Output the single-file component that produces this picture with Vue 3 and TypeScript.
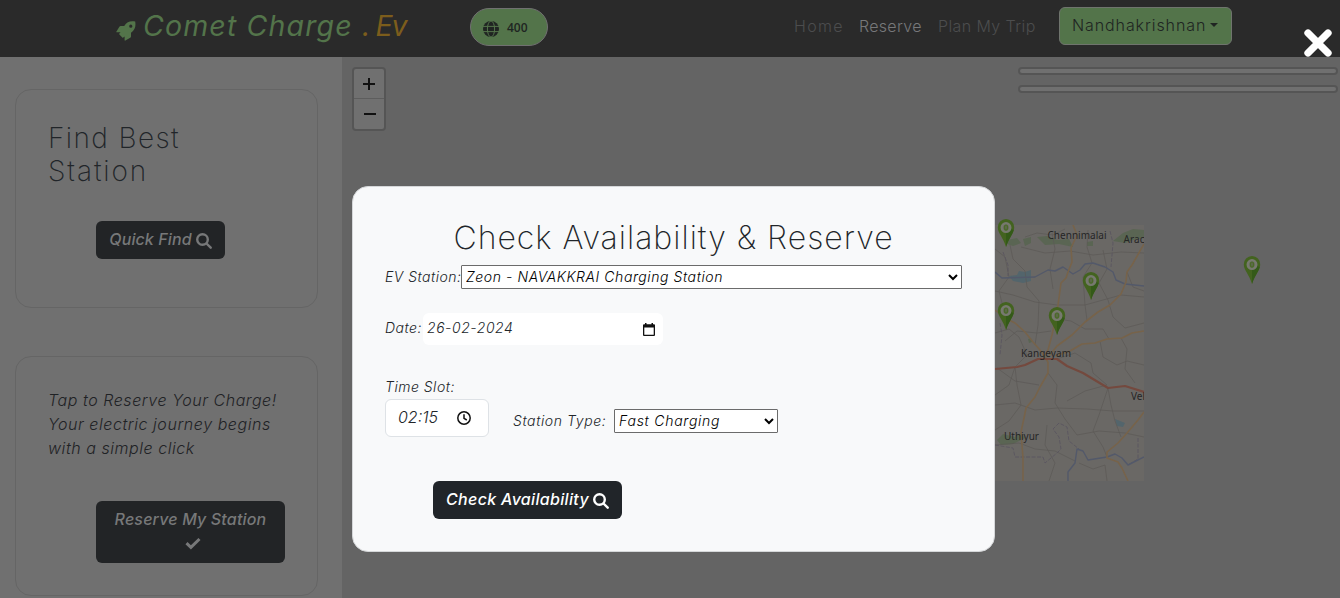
<script setup lang="ts">
import { ref } from 'vue'

interface Pin { x: number; y: number }

const station = ref('Zeon - NAVAKKRAI Charging Station')
const stationType = ref('Fast Charging')

const pins: Pin[] = [
  { x: 656, y: 162 },
  { x: 741, y: 215 },
  { x: 656, y: 245 },
  { x: 707, y: 250 },
  { x: 902, y: 199 },
]

const minorRoads: string[] = [
  'M0 66 L18 70 L40 77 L62 80 L90 80 L126 70 L149 72',
  'M15 20 L18 34 L30 46 L32 62 L44 76 L43 100 L40 120',
  'M26 22 L50 28 L75 26 L98 30 L126 27 L149 28',
  'M57 8 L60 24 L55 44 L58 64',
  'M93 5 L92 22 L97 38 L88 52 L90 80 L92 95',
  'M108 25 L112 44 L104 58 L113 75 L118 92 L130 103 L149 98',
  'M0 108 L14 104 L24 112 L32 130 L20 142 L14 160 L0 170',
  'M20 142 L22 160 L26 180 L14 196 L0 205',
  'M53 148 L62 160 L60 178 L70 194 L82 210 L104 206 L130 208 L149 212',
  'M0 180 L20 178 L40 185 L62 183 L92 184 L118 186 L149 186',
  'M113 163 L108 178 L104 190 L98 206 L108 222 L112 232',
  'M113 163 L116 180 L120 196 L126 212',
  'M62 134 L80 128 L96 138 L98 148 L112 160 L90 166 L72 176',
  'M105 116 L108 132 L122 140 L132 136 L149 140',
  'M126 113 L132 124 L130 144 L140 158',
  'M0 220 L24 218 L40 224 L60 226 L80 236',
  'M52 200 L50 220 L60 238 L54 256',
  'M84 238 L98 244 L110 240 L112 256',
  'M30 12 L42 8 L58 10 L70 4',
  'M132 47 L138 62 L149 66',
  'M2 143 L20 156 L44 160',
  'M0 24 L10 32 L14 52 L4 66 L8 82',
  'M62 94 L76 96 L90 104 L108 104 L114 114',
  'M10 116 L22 106 L42 108 L56 106',
]

const mainRoads: string[] = [
  'M78 0 L82 10 L76 23 L77 37 L73 47 L71 53 L66 58 L64 73 L62 87 L57 110 L53 125 L50 130',
  'M149 19 L137 40 L132 47 L131 57 L126 69 L115 80 L103 87 L90 97 L77 110 L62 121 L54 131',
  'M149 106 L137 108 L127 113 L112 114 L100 118 L87 119 L75 126 L60 131',
  'M0 85 L10 93 L20 98 L30 107 L38 117 L45 125 L53 137',
  'M53 137 L53 148 L45 162 L40 172 L31 183 L29 193 L26 207 L28 233 L28 256',
  'M149 187 L143 195 L132 208 L123 218 L112 227 L112 233 L123 237 L127 243 L133 256',
]
</script>

<template>
  <div class="page">
    <nav class="navbar">
      <div class="brand">
        <svg class="rocket" viewBox="0 0 20 20" aria-hidden="true">
          <path fill-rule="evenodd" d="M19.2.6C14.5-.3 11 .7 8.2 5H4.600Q3.800 5 3.400 5.800L.3 10.700Q.1 11.200.8 11.300H4.500L3.400 12.600Q2.900 13.100 3.400 13.600L6.300 16.600Q6.800 17 7.300 16.500L8.600 15.500V19.200Q8.700 19.900 9.400 19.600L14.200 16.800Q15 16.400 15 15.500V11.700C19 8.800 20 5.400 19.200.6ZM14.800 3.600A1.600 1.600 0 1 1 14.800 6.800A1.600 1.600 0 0 1 14.800 3.600Z" />
        </svg>
        <span class="brand-name">Comet Charge <b>. Ev</b></span>
      </div>
      <div class="credits">
        <svg viewBox="0 0 16 16" aria-hidden="true">
          <circle cx="8" cy="8" r="8" fill="#202522" />
          <g fill="none" stroke="#53744a" stroke-width="1">
            <ellipse cx="8" cy="8" rx="3.600" ry="8" />
            <path d="M0 5.400H16M0 10.600H16" />
          </g>
        </svg>
        <span>400</span>
      </div>
      <div class="links">
        <a class="home">Home</a>
        <a class="active">Reserve</a>
        <a class="trip">Plan My Trip</a>
      </div>
      <button class="user"><span>Nandhakrishnan</span><i class="caret"></i></button>
    </nav>

    <div class="content">
      <aside class="sidebar">
        <section class="card find">
          <h2>Find Best<br /><span>Station</span></h2>
          <button class="dark-btn muted quick">
            <span>Quick Find</span>
            <svg viewBox="0 0 16 16" aria-hidden="true"><circle cx="6.500" cy="6.500" r="5.300" /><path d="M10.500 10.500L14.700 14.700" /></svg>
          </button>
        </section>
        <section class="card tap">
          <p>Tap to Reserve Your Charge!<br />Your electric journey begins<br />with a simple click</p>
          <button class="dark-btn muted reserve">
            <span>Reserve My Station</span>
            <svg viewBox="0 0 16 16" aria-hidden="true"><path d="M1.500 8.200L5.900 12.400L14.500 4" /></svg>
          </button>
        </section>
      </aside>

      <main class="map">
        <div class="zoom">
          <button><svg viewBox="0 0 14 14"><path d="M1 7H13M7 1V13" /></svg></button>
          <button><svg viewBox="0 0 14 14"><path d="M1 7H13" /></svg></button>
        </div>
        <div class="bars"><div></div><div></div></div>
        <svg class="tile" viewBox="0 0 149 256" aria-hidden="true">
          <rect width="149" height="256" fill="#6a6865" />
          <g fill="#5a6553">
            <path d="M12 15L22 13L26 18L18 21L12 19Z" />
            <path d="M28 14L36 12L36 18L30 21Z" />
            <path d="M42 12L52 11L62 15L74 14L78 22L64 19L50 20Z" />
            <path d="M92 17L98 16L98 21L92 21Z" />
            <path d="M118 16L128 8L138 4L149 5V13L138 15L130 18Z" />
            <path d="M2 215L8 209L20 212L26 208L30 213L18 219L6 220Z" />
            <path d="M33 114L36 113L37 117L34 118Z" />
          </g>
          <g fill="#53656c">
            <path d="M14 51L22 50L24 46L30 47L36 45L36 56L28 58L18 56Z" />
            <path d="M120 194L130 198L128 202L122 201Z" />
          </g>
          <g class="minor"><path v-for="d in minorRoads" :key="d" :d="d" /></g>
          <g class="border">
            <path d="M0 220L18 223L20 232L48 232L50 238L62 228L66 224L64 212L58 204L64 198L72 202L74 216L84 224" />
            <path d="M143 213V234L133 240M115 6L118 18L116 42M8 27L13 40V51M5 98L7 110L5 130" />
          </g>
          <g class="river">
            <path d="M0 47L7 53L40 52L53 45L60 46L68 42L78 49L85 45L90 39L98 38L110 42L118 47L121 55L130 59L149 61" />
            <path d="M73 256V247L80 238L82 224L88 226L93 235L112 232L120 229L127 233L133 240L149 232" />
          </g>
          <g class="main"><path v-for="d in mainRoads" :key="d" :d="d" /></g>
          <path class="highway" d="M0 144L22 142L30 140L43 134L62 134L72 141L88 148L113 163L130 161L149 167" />
          <g class="labels">
            <text x="52.500" y="14.400" textLength="59">Chennimalai</text>
            <text x="128.500" y="18" textLength="21">Arac</text>
            <text x="26" y="132" textLength="50">Kangeyam</text>
            <text x="9" y="215" textLength="35">Uthiyur</text>
            <text x="136" y="174.500">Vel</text>
          </g>
        </svg>
        <svg
          v-for="(pin, i) in pins"
          :key="i"
          class="pin"
          viewBox="0 0 18 28"
          :style="{ left: pin.x + 'px', top: pin.y + 'px' }"
          aria-hidden="true"
        >
          <path fill="#43631f" d="M9 0A8.200 8.200 0 0 1 17.200 8.500C17.200 14 12 18 9 28C6 18 .8 14 .8 8.500A8.200 8.200 0 0 1 9 0Z" />
          <path fill="#345a18" d="M9 8L16.700 11C15.500 16 11.500 20 9 28Z" />
          <circle cx="9" cy="8.600" r="4.300" fill="#6c7062" stroke="#77796f" stroke-width="2.400" />
          <ellipse cx="9" cy="8.600" rx="1.600" ry="2.600" fill="#5e6a4c" stroke="#4b6a28" stroke-width="1.200" />
        </svg>
      </main>
    </div>

    <div class="overlay">
      <button class="close"><svg viewBox="0 0 28 28"><path d="M4 4L24 24M24 4L4 24" /></svg></button>
      <section class="modal">
        <h1>Check Availability &amp; Reserve</h1>
        <div class="row station-row">
          <label>EV Station:</label>
          <select v-model="station"><option>Zeon - NAVAKKRAI Charging Station</option></select>
        </div>
        <div class="row date-row">
          <label>Date:</label>
          <div class="date">
            <span>26-02-2024</span>
            <svg viewBox="0 0 12 14"><path fill-rule="evenodd" d="M2 0H3.500V1.300H8.500V0H10V1.300H11Q12 1.300 12 2.300V12Q12 13 11 13H1Q0 13 0 12V2.300Q0 1.300 1 1.300H2ZM1.300 4.500V11.700H10.700V4.500Z" /></svg>
          </div>
        </div>
        <div class="slot-row">
          <div class="slot">
            <label>Time Slot:</label>
            <div class="time">
              <span>02:15</span>
              <svg viewBox="0 0 14 14"><circle cx="7" cy="7" r="6.200" /><path d="M7 3.200V7.300L9.800 9" /></svg>
            </div>
          </div>
          <div class="row type-row">
            <label>Station Type:</label>
            <select v-model="stationType"><option>Fast Charging</option></select>
          </div>
        </div>
        <button class="dark-btn check">
          <span>Check Availability</span>
          <svg viewBox="0 0 16 16" aria-hidden="true"><circle cx="6.500" cy="6.500" r="5.300" /><path d="M10.500 10.500L14.700 14.700" /></svg>
        </button>
      </section>
    </div>
  </div>
</template>

<style>
body { margin: 0; overflow: hidden; }
</style>

<style scoped>
* { box-sizing: border-box; }
.page {
  position: relative;
  width: 1340px;
  height: 598px;
  overflow: hidden;
  font-family: Inter, "Open Sans", sans-serif;
  font-feature-settings: "cv11";
  color: #212529;
}
button { font: inherit; font-feature-settings: inherit; margin: 0; }
svg { display: block; flex: none; }

.navbar { display: flex; height: 57px; background: #2a2a2a; padding-left: 116px; }
.brand { display: flex; width: 354px; }
.rocket { width: 20px; height: 20px; margin-top: 21px; fill: #53744a; }
.brand-name {
  margin: 7px 0 0 7px;
  font-size: 28.500px;
  line-height: 38px;
  font-style: italic;
  color: #53744a;
  white-space: nowrap;
  letter-spacing: 1.150px;
}
.brand-name b { font-weight: 400; color: #7c5d1c; letter-spacing: -1.300px; }
.credits {
  display: flex;
  align-items: center;
  width: 78px;
  height: 38px;
  margin-top: 8px;
  padding-left: 12px;
  border: 1px solid #707070;
  border-radius: 19px;
  background: #53744a;
  font: 600 12px "Open Sans", sans-serif;
  color: #202522;
}
.credits svg { width: 16px; height: 16px; margin: 3px 8px 0 0; }
.links {
  display: flex;
  margin-left: 246px;
  padding-top: 14px;
  width: 265px;
  gap: 16px;
  font-feature-settings: normal;
  font-size: 16px;
  line-height: 24px;
  font-weight: 300;
  color: #4c4d4e;
  white-space: nowrap;
}
.links .home { width: 49px; letter-spacing: 1.300px; }
.links .active { width: 63px; letter-spacing: 0.300px; color: #77787a; }
.links .trip { letter-spacing: 0.400px; }
.user {
  display: flex;
  align-items: center;
  width: 173px;
  height: 38px;
  margin-top: 7px;
  padding: 0 0 2px 12px;
  border: 1px solid #6f746d;
  border-radius: 6px;
  background: #53744a;
  color: #202522;
  font-size: 16px;
  font-weight: 300;
  font-feature-settings: normal;
  letter-spacing: 0.900px;
}
.caret { margin-left: 4px; border: 4px solid transparent; border-top-color: #202522; border-bottom: 0; }

.content { display: flex; height: 541px; }
.sidebar { width: 342px; padding: 32px 24px 0 15px; background: #707070; }
.card { width: 303px; border: 1px solid #656565; border-radius: 16px; padding: 32px; }
.find { height: 219px; }
.tap { height: 240px; margin-top: 48px; }
.card h2 {
  margin: 0;
  font-size: 28px;
  line-height: 33px;
  font-weight: 200;
  font-feature-settings: normal;
  letter-spacing: 1.400px;
}
.card h2 span { letter-spacing: 1.900px; }
.card p {
  margin: -1px 0 0;
  font-size: 16px;
  line-height: 24px;
  font-style: italic;
  font-weight: 300;
  letter-spacing: 0.550px;
  white-space: nowrap;
  color: #1f2225;
}
.dark-btn {
  display: flex;
  align-items: center;
  justify-content: center;
  gap: 4px;
  height: 38px;
  padding: 0;
  border: 0;
  border-radius: 6px;
  background: #212529;
  color: #fff;
  font-size: 16px;
  font-style: italic;
  font-weight: 500;
  line-height: 24px;
  white-space: nowrap;
}
.dark-btn span { margin-top: -2px; }
.dark-btn svg { width: 16px; height: 16px; fill: none; stroke: currentColor; stroke-width: 2.400; stroke-linecap: round; margin-top: 1px; }
.dark-btn.muted { background: #222426; color: #777879; }
.quick { width: 129px; margin: 33px 0 0 48px; letter-spacing: 0.100px; }
.reserve { flex-direction: column; gap: 0; width: 189px; height: 62px; margin: 41px 0 0 48px; letter-spacing: 0.170px; }
.dark-btn.reserve svg { stroke-width: 3; margin: 4px 0 4px 5px; stroke-linecap: butt; }

.map { position: relative; flex: 1; background: #646464; }
.zoom {
  width: 34px;
  height: 64px;
  margin: 10px 0 0 10px;
  border: 2px solid #555;
  border-radius: 4px;
  background: #707070;
}
.zoom button { display: grid; place-items: center; width: 30px; height: 29px; padding: 0; border: 0; background: none; }
.zoom button:first-child { height: 30px; border-bottom: 1px solid #5d5d5d; }
.zoom button:last-child { padding: 0 0 0 1px; }
.zoom svg { width: 14px; height: 14px; stroke: #111; stroke-width: 2; }
.bars { position: absolute; top: 10px; right: 2px; display: grid; gap: 10px; width: 320px; }
.bars div { height: 8px; border: 2px solid #555; border-radius: 4px; background: #707070; }
.tile { position: absolute; left: 653px; top: 168px; width: 149px; height: 256px; }
.tile g, .highway { stroke-linejoin: round; }
.minor { fill: none; stroke: #5b5956; stroke-width: 0.700; }
.border { fill: none; stroke: #5a5660; stroke-width: 0.900; stroke-dasharray: 4 1.500; }
.river { fill: none; stroke: #53596a; stroke-width: 1.400; }
.main { fill: none; stroke: #77634a; stroke-width: 1.600; }
.highway { fill: none; stroke: #74493e; stroke-width: 2.200; }
.labels { font: 10px "Noto Sans", sans-serif; fill: #252525; stroke: none; }
.pin { position: absolute; width: 18px; height: 28px; margin-left: -1px; }

.overlay { position: absolute; inset: 0; }
.close { position: absolute; left: 1304px; top: 29px; width: 28px; height: 28px; padding: 0; border: 0; background: none; }
.close svg { width: 28px; height: 28px; stroke: #fff; stroke-width: 7.300; stroke-linecap: round; }
.modal {
  position: absolute;
  left: 352px;
  top: 186px;
  width: 643px;
  height: 366px;
  padding: 32px;
  border: 1px solid #d5d7d9;
  border-radius: 16px;
  background: #f8f9fa;
}
.modal h1 {
  margin: 0;
  text-align: center;
  font-size: 32px;
  line-height: 38px;
  font-weight: 200;
  font-feature-settings: normal;
  letter-spacing: 1px;
  white-space: nowrap;
}
.modal label { font-size: 14px; font-style: italic; font-weight: 300; line-height: 24px; letter-spacing: 0.500px; white-space: nowrap; }
.row { display: flex; align-items: center; }
.station-row { margin-top: 8px; }
.station-row label { width: 76px; }
select {
  height: 24px;
  margin: 0;
  padding: 0 0 1px;
  border: 1px solid #6b6b6b;
  border-radius: 1px;
  background-color: #fff;
  color: #000;
  font-family: inherit;
  font-feature-settings: inherit;
  font-size: 14px;
  font-style: italic;
  font-weight: 300;
}
.station-row select { width: 501px; letter-spacing: 0.580px; }
.date-row { height: 32px; margin-top: 24px; }
.date-row label { width: 38px; margin-top: -3px; }
.date {
  display: flex;
  align-items: center;
  justify-content: space-between;
  width: 240px;
  height: 32px;
  padding: 0 8px 2px 4px;
  border-radius: 6px;
  background: #fff;
  font-size: 14px;
  font-style: italic;
  font-weight: 300;
  letter-spacing: 0.550px;
  color: #212529;
}
.date span { margin-top: -1px; }
.date svg { width: 12px; height: 14px; margin-top: 3px; fill: #111; }
.slot-row { display: flex; margin-top: 30px; height: 62px; }
.slot { display: flex; flex-direction: column; width: 104px; }
.time {
  display: flex;
  align-items: center;
  width: 104px;
  height: 38px;
  padding: 0 0 1px 12px;
  border: 1px solid #dee2e6;
  border-radius: 6px;
  background: #fff;
  font-size: 16px;
  font-style: italic;
  font-weight: 300;
}
.time span { width: 59px; margin-top: -1px; }
.time svg { width: 14px; height: 14px; fill: none; stroke: #111; stroke-width: 1.500; }
.type-row { height: 24px; margin: 34px 0 0 24px; }
.modal .type-row label { width: 101px; letter-spacing: 0.600px; }
.type-row select { width: 164px; letter-spacing: 0.750px; }
.check { width: 189px; margin: 44px 0 0 48px; letter-spacing: 0.320px; }
</style>
